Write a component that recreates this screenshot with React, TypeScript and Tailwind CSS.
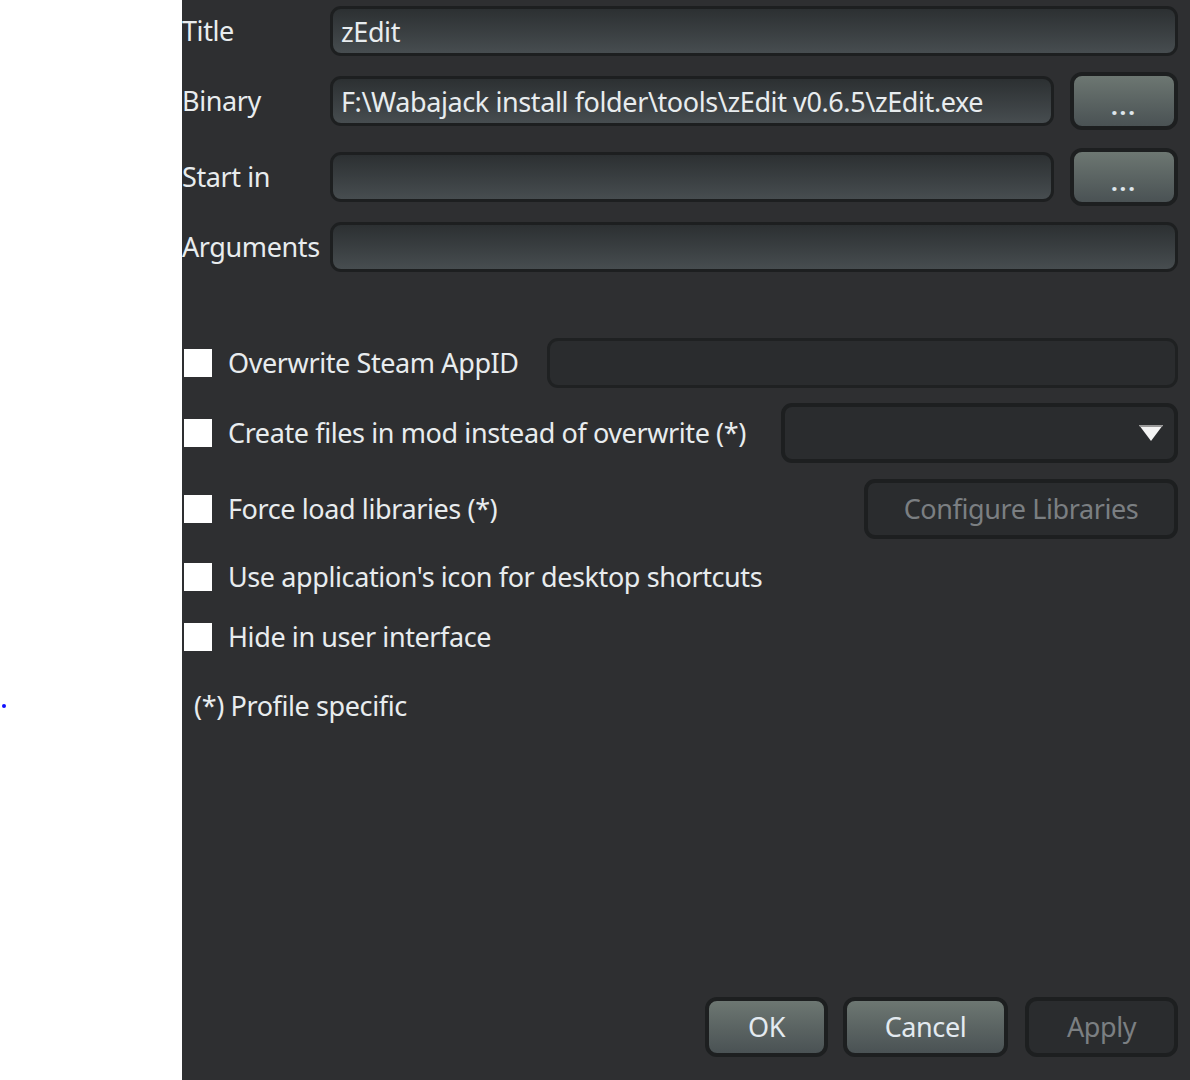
import React from "react";

const font = { fontFamily: '"Noto Sans", "DejaVu Sans", sans-serif', letterSpacing: "-0.4px" };

function Field({ value, className = "" }: { value?: string; className?: string }) {
  return (
    <div
      className={`flex h-[50px] items-center rounded-[11px] border-[3px] border-[#1d1f20] bg-gradient-to-b from-[#2c3032] to-[#474d50] px-[8px] pt-[3px] text-[27px] text-[#e8ecee] ${className}`}
    >
      {value}
    </div>
  );
}

function DotsButton() {
  return (
    <div className="flex h-[58px] w-[108px] items-center justify-center rounded-[12px] border-[4px] border-[#1d1f20] bg-gradient-to-b from-[#6d7772] to-[#4a5254]">
      <span className="pt-[10px] text-[24px] font-bold leading-none tracking-[2px] text-[#dfe6ec]">...</span>
    </div>
  );
}

function Check() {
  return <div className="h-[28px] w-[28px] shrink-0 bg-white" />;
}

function Label({ children }: { children: React.ReactNode }) {
  return <div className="w-[148px] shrink-0 text-[27px] text-[#e8ecee]">{children}</div>;
}

export default function App() {
  return (
    <div className="flex h-[1080px] w-[1190px] bg-white" style={font}>
      <div className="relative w-[182px] shrink-0">
        <div className="absolute left-[2px] top-[704px] h-[4px] w-[4px] rounded-full bg-[#1010ff]" />
      </div>
      <div className="flex flex-1 flex-col bg-[#2e2f31] pr-[12px]">
        <div className="flex flex-col pt-[6px]">
          <div className="flex h-[50px] items-center">
            <Label>Title</Label>
            <Field value="zEdit" className="flex-1" />
          </div>
          <div className="mt-[16px] flex h-[58px] items-center gap-[16px]">
            <div className="flex flex-1 items-center">
              <Label>Binary</Label>
              <Field value="F:\Wabajack install folder\tools\zEdit v0.6.5\zEdit.exe" className="flex-1" />
            </div>
            <DotsButton />
          </div>
          <div className="mt-[18px] flex h-[58px] items-center gap-[16px]">
            <div className="flex flex-1 items-center">
              <Label>Start in</Label>
              <Field className="flex-1" />
            </div>
            <DotsButton />
          </div>
          <div className="mt-[16px] flex h-[50px] items-center">
            <Label>Arguments</Label>
            <Field className="flex-1" />
          </div>
        </div>

        <div className="mt-[66px] flex h-[50px] items-center pl-[2px]">
          <Check />
          <span className="ml-[16px] text-[27px] text-[#e8ecee]">Overwrite Steam AppID</span>
          <div className="ml-[28px] h-[50px] flex-1 rounded-[11px] border-[3px] border-[#1f2122] bg-[#2a2c2e]" />
        </div>

        <div className="mt-[15px] flex h-[60px] items-center pl-[2px]">
          <Check />
          <span className="ml-[16px] text-[27px] text-[#e8ecee]">Create files in mod instead of overwrite (*)</span>
          <div className="ml-auto flex h-[60px] w-[397px] items-center justify-end rounded-[11px] border-[4px] border-[#1d1f20] bg-[#2a2c2e] pr-[10px]">
            <svg width="26" height="18" viewBox="0 0 26 18">
              <polygon points="1,1 25,1 13,17" fill="#f4f4f4" />
              <polygon points="1,1 25,1 24,3 2,3" fill="#9a9a9a" />
            </svg>
          </div>
        </div>

        <div className="mt-[16px] flex h-[60px] items-center pl-[2px]">
          <Check />
          <span className="ml-[16px] text-[27px] text-[#e8ecee]">Force load libraries (*)</span>
          <div className="ml-auto flex h-[60px] w-[314px] items-center justify-center rounded-[11px] border-[4px] border-[#1d1f20] bg-[#2a2c2e] text-[27px] text-[#7b7f82]">
            Configure Libraries
          </div>
        </div>

        <div className="mt-[18px] flex h-[40px] items-center pl-[2px]">
          <Check />
          <span className="ml-[16px] text-[27px] text-[#e8ecee]">Use application's icon for desktop shortcuts</span>
        </div>

        <div className="mt-[20px] flex h-[40px] items-center pl-[2px]">
          <Check />
          <span className="ml-[16px] text-[27px] text-[#e8ecee]">Hide in user interface</span>
        </div>

        <div className="mt-[29px] flex h-[40px] items-center pl-[12px] text-[27px] text-[#e8ecee]">
          (*) Profile specific
        </div>

        <div className="mt-auto mb-[23px] flex justify-end gap-[15px]">
          <div className="flex h-[60px] w-[123px] items-center justify-center rounded-[12px] border-[4px] border-[#1d1f20] bg-gradient-to-b from-[#6d7772] to-[#4a5254] text-[27px] text-[#e3eaf0]">
            OK
          </div>
          <div className="flex h-[60px] w-[165px] items-center justify-center rounded-[12px] border-[4px] border-[#1d1f20] bg-gradient-to-b from-[#6d7772] to-[#4a5254] text-[27px] text-[#e3eaf0]">
            Cancel
          </div>
          <div className="ml-[2px] flex h-[60px] w-[153px] items-center justify-center rounded-[12px] border-[4px] border-[#1d1f20] bg-[#2a2c2e] text-[27px] text-[#7b7f82]">
            Apply
          </div>
        </div>
      </div>
    </div>
  );
}
